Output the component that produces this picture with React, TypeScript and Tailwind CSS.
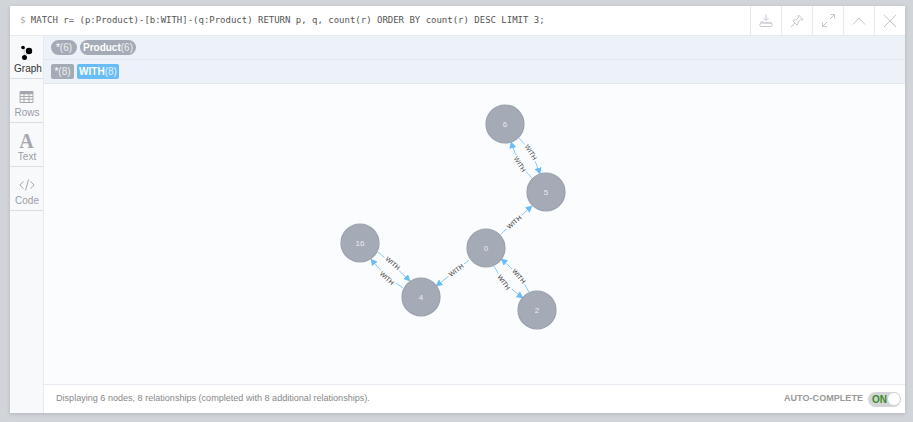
const edges = [
  { x1: 378, y1: 252, x2: 410, y2: 281, cx: 394, cy: 265, lx: 393, ly: 263, a: 41 },
  { x1: 403, y1: 288, x2: 371, y2: 259, cx: 385, cy: 277, lx: 387, ly: 278, a: 42 },
  { x1: 469, y1: 260, x2: 436, y2: 286, cx: 453, cy: 273, lx: 456, ly: 270, a: -38 },
  { x1: 494, y1: 266, x2: 523, y2: 298, cx: 503, cy: 284, lx: 504, ly: 282, a: 55 },
  { x1: 529, y1: 292, x2: 501, y2: 259, cx: 520, cy: 274, lx: 519, ly: 276, a: 50 },
  { x1: 501, y1: 234, x2: 532, y2: 206, cx: 516, cy: 220, lx: 514, ly: 222, a: -40 },
  { x1: 519, y1: 138, x2: 540, y2: 174, cx: 533, cy: 152, lx: 531, ly: 152, a: 58 },
  { x1: 532, y1: 178, x2: 511, y2: 142, cx: 518, cy: 165, lx: 520, ly: 164, a: 58 },
]

const nodes = [
  { id: '6', x: 505, y: 124 },
  { id: '5', x: 546, y: 192 },
  { id: '0', x: 486, y: 248 },
  { id: '16', x: 360, y: 243 },
  { id: '4', x: 421, y: 297 },
  { id: '2', x: 537, y: 310 },
]

function GraphView() {
  return (
    <svg viewBox="44 84 861 300" className="block w-full h-full">
      <defs>
        <marker id="head" viewBox="0 0 10 10" refX="9" refY="5" markerWidth="7" markerHeight="7" markerUnits="userSpaceOnUse" orient="auto">
          <path d="M0 0L10 5L0 10z" fill="#68bdf6" />
        </marker>
      </defs>
      {edges.map((e, i) => (
        <g key={i}>
          <path d={`M${e.x1} ${e.y1}Q${e.cx} ${e.cy} ${e.x2} ${e.y2}`} fill="none" stroke="#68bdf6" strokeWidth="0.8" markerEnd="url(#head)" />
          <g transform={`translate(${e.lx} ${e.ly}) rotate(${e.a})`}>
            <rect x="-10" y="-4" width="20" height="8" fill="#fbfcfe" />
            <text y="2.5" textAnchor="middle" fontSize="6.5" fontFamily="Liberation Sans, sans-serif" fill="#333">WITH</text>
          </g>
        </g>
      ))}
      {nodes.map((n) => (
        <g key={n.id}>
          <circle cx={n.x} cy={n.y} r="19" fill="#a5abb6" stroke="#9aa1ac" strokeWidth="1.2" />
          <text x={n.x} y={n.y + 3} textAnchor="middle" fontSize="8" fontFamily="Liberation Sans, sans-serif" fill="#e8eaee">{n.id}</text>
        </g>
      ))}
    </svg>
  )
}

function HeaderButton({ children }: { children: React.ReactNode }) {
  return <div className="w-[31px] h-full border-l border-[#e6e9ef] flex items-center justify-center">{children}</div>
}

function SideTab({ label, active, first, children }: { label: string; active?: boolean; first?: boolean; children: React.ReactNode }) {
  return (
    <div className={`${first ? 'h-[43px]' : 'h-[44px]'} border-b border-[#dadde3] flex flex-col items-center justify-end pb-[3px]`}>
      <div className="h-[22px] flex items-center justify-center translate-y-[1px]">{children}</div>
      <span className={`text-[10px] leading-[12px] ${active ? 'text-[#333] pl-[3px]' : 'text-[#9a9ea6] pl-[1px]'}`}>{label}</span>
    </div>
  )
}

export default function App() {
  return (
    <div className="w-[913px] h-[422px] bg-[#d1d4d9] pt-[6px] pl-[10px] font-['Liberation_Sans',sans-serif] overflow-hidden">
      <div className="w-[895px] h-[407px] bg-white flex flex-col shadow-[0_1px_4px_rgba(0,0,0,0.15)]">
        <div className="h-[30px] shrink-0 flex items-center border-b border-[#e6e9ef]">
          <div className="flex-1 pl-[10px] font-['DejaVu_Sans_Mono',monospace] text-[9px] tracking-[-0.01px] text-[#555]">
            <span className="text-[#aaa]">$ </span>MATCH r= (p:Product)-[b:WITH]-(q:Product) RETURN p, q, count(r) ORDER BY count(r) DESC LIMIT 3;
          </div>
          <div className="flex h-full">
            <HeaderButton>
              <svg width="14" height="14" viewBox="0 0 14 14" fill="none" stroke="#c4c7cd" strokeWidth="1">
                <path d="M7 0.5V6M4.5 4L7 6.5L9.500 4" />
                <path d="M1 8H4.500L5.500 9H13" />
                <rect x="0.800" y="9" width="12.400" height="3.500" rx="1.500" />
              </svg>
            </HeaderButton>
            <HeaderButton>
              <svg width="14" height="14" viewBox="0 0 14 14" fill="none" stroke="#c4c7cd" strokeWidth="1">
                <path d="M8.500 1L13 5.500L11.800 6L10.300 5.500L8 8L8 10.500L7 11L3 7L3.500 6L6 6L8.500 3.700L8 2z" />
                <path d="M5 9L1 13" />
              </svg>
            </HeaderButton>
            <HeaderButton>
              <svg width="15" height="14" viewBox="0 0 15 14" fill="none" stroke="#c4c7cd" strokeWidth="1">
                <path d="M1.500 12.500L6 8M9 5L13.500 0.500" />
                <path d="M9.500 0.500H13.500V4.500M1.500 8.500V12.500H5.500" />
              </svg>
            </HeaderButton>
            <HeaderButton>
              <svg width="14" height="8" viewBox="0 0 14 8" fill="none" stroke="#c4c7cd" strokeWidth="1">
                <path d="M1 7.500L7 1L13 7.500" />
              </svg>
            </HeaderButton>
            <HeaderButton>
              <svg width="14" height="14" viewBox="0 0 14 14" fill="none" stroke="#c4c7cd" strokeWidth="1">
                <path d="M1 1L13 13M13 1L1 13" />
              </svg>
            </HeaderButton>
          </div>
        </div>
        <div className="flex-1 flex min-h-0">
          <div className="w-[34px] shrink-0 bg-[#f8f9fb] border-r border-[#e6e9ef]">
            <SideTab label="Graph" active first>
              <svg width="14" height="16" viewBox="0 0 14 16">
                <path d="M4 3L9 5.500L4.500 12.500z" fill="none" stroke="#333" strokeWidth="0.500" strokeDasharray="1 1" />
                <circle cx="3" cy="2.500" r="1.800" fill="#000" />
                <circle cx="9" cy="6" r="3.200" fill="#000" />
                <circle cx="4.500" cy="12.500" r="2.500" fill="#000" />
              </svg>
            </SideTab>
            <SideTab label="Rows">
              <svg width="15" height="12" viewBox="0 0 15 13" fill="#a3a7ae">
                <path d="M1 0H14A1 1 0 0 1 15 1V12A1 1 0 0 1 14 13H1A1 1 0 0 1 0 12V1A1 1 0 0 1 1 0zM1 3.500V5.500H4.300V3.500zM5.300 3.500V5.500H9.700V3.500zM10.700 3.500V5.500H14V3.500zM1 6.500V8.500H4.300V6.500zM5.300 6.500V8.500H9.700V6.500zM10.700 6.500V8.500H14V6.500zM1 9.500V12H4.300V9.500zM5.300 9.500V12H9.700V9.500zM10.700 9.500V12H14V9.500z" fillRule="evenodd" />
              </svg>
            </SideTab>
            <SideTab label="Text">
              <span className="font-['Liberation_Serif',serif] font-bold text-[20px] leading-[20px] text-[#a3a7ae]">A</span>
            </SideTab>
            <SideTab label="Code">
              <svg width="16" height="12" viewBox="0 0 16 12" fill="none" stroke="#a3a7ae" strokeWidth="1">
                <path d="M4.500 2.500L0.800 6L4.500 9.500M11.500 2.500L15.200 6L11.500 9.500M9.500 0.500L6.500 11.500" />
              </svg>
            </SideTab>
          </div>
          <div className="flex-1 flex flex-col min-w-0">
            <div className="h-[24px] shrink-0 bg-[#edf1f8] border-b border-[#e1e5ec] flex items-center pl-[7px] gap-[3px]">
              <span className="h-[15px] w-[26px] rounded-full bg-[#a5abb6] text-white text-[10px] leading-[15px] text-center">*<span className="opacity-80">(6)</span></span>
              <span className="h-[15px] w-[56px] rounded-full bg-[#a5abb6] text-white text-[10px] leading-[15px] text-center font-bold">Product<span className="font-normal opacity-80">(6)</span></span>
            </div>
            <div className="h-[24px] shrink-0 bg-[#edf1f8] border-b border-[#e1e5ec] flex items-center pl-[7px] gap-[3px]">
              <span className="h-[15px] w-[23px] rounded-[2px] bg-[#a5abb6] text-white text-[10px] leading-[15px] text-center">*<span className="opacity-80">(8)</span></span>
              <span className="h-[15px] w-[42px] rounded-[2px] bg-[#68bdf6] text-white text-[10px] leading-[15px] text-center font-bold">WITH<span className="font-normal opacity-80">(8)</span></span>
            </div>
            <div className="flex-1 min-h-0 bg-[#fbfcfe]">
              <GraphView />
            </div>
            <div className="h-[29px] shrink-0 border-t border-[#e6e9ef] bg-white flex items-center justify-between pl-[12px] pr-[4px]">
              <span className="text-[9.07px] text-[#888]">Displaying 6 nodes, 8 relationships (completed with 8 additional relationships).</span>
              <div className="flex items-center gap-[5px]">
                <span className="text-[9px] font-bold text-[#999] tracking-[0.05px]">AUTO-COMPLETE</span>
                <div className="w-[33px] h-[15px] rounded-full bg-[#d3d5d8] flex items-center justify-between pl-[4px]">
                  <span className="text-[10px] font-bold text-[#3c8a1f]">ON</span>
                  <span className="w-[14px] h-[14px] rounded-full bg-white border border-[#d0d2d6]" />
                </div>
              </div>
            </div>
          </div>
        </div>
      </div>
    </div>
  )
}
